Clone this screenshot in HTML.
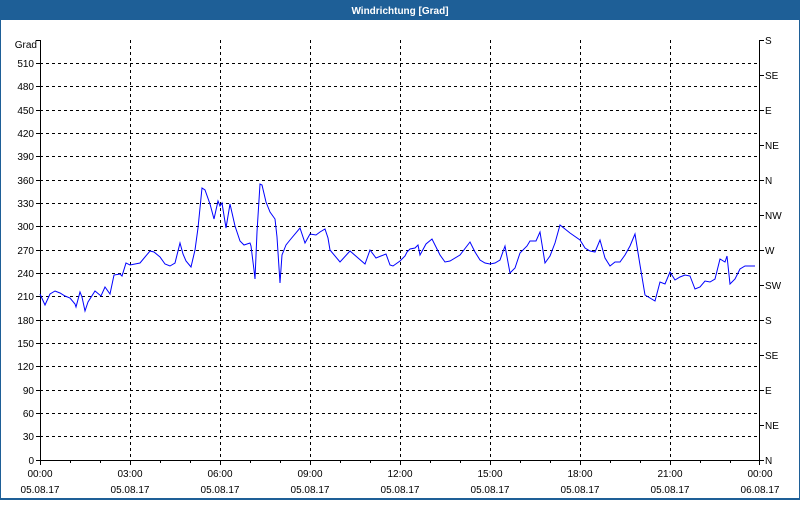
<!DOCTYPE html>
<html><head><meta charset="utf-8"><style>
body{margin:0;width:800px;height:500px;overflow:hidden;background:#fff;font-family:"Liberation Sans",sans-serif;}
</style></head><body>
<svg width="800" height="500" xmlns="http://www.w3.org/2000/svg" font-family="Liberation Sans, sans-serif" font-size="10">
<rect x="0" y="0" width="800" height="500" fill="#fff"/>
<rect x="0" y="0" width="800" height="20" fill="#1e5f97"/>
<rect x="0" y="20" width="1" height="480" fill="#1e5f97"/>
<rect x="799" y="20" width="1" height="480" fill="#1e5f97"/>
<rect x="0" y="498" width="800" height="2" fill="#1e5f97"/>
<text x="400" y="14" fill="#fff" font-weight="bold" font-size="10" text-anchor="middle">Windrichtung [Grad]</text>
<g stroke="#000" stroke-width="1" stroke-dasharray="3,3" shape-rendering="crispEdges">
<line x1="40" x2="760" y1="63.5" y2="63.5"/><line x1="40" x2="760" y1="86.5" y2="86.5"/><line x1="40" x2="760" y1="110.5" y2="110.5"/><line x1="40" x2="760" y1="133.5" y2="133.5"/><line x1="40" x2="760" y1="156.5" y2="156.5"/><line x1="40" x2="760" y1="180.5" y2="180.5"/><line x1="40" x2="760" y1="203.5" y2="203.5"/><line x1="40" x2="760" y1="226.5" y2="226.5"/><line x1="40" x2="760" y1="250.5" y2="250.5"/><line x1="40" x2="760" y1="273.5" y2="273.5"/><line x1="40" x2="760" y1="296.5" y2="296.5"/><line x1="40" x2="760" y1="320.5" y2="320.5"/><line x1="40" x2="760" y1="343.5" y2="343.5"/><line x1="40" x2="760" y1="366.5" y2="366.5"/><line x1="40" x2="760" y1="390.5" y2="390.5"/><line x1="40" x2="760" y1="413.5" y2="413.5"/><line x1="40" x2="760" y1="436.5" y2="436.5"/>
<line x1="130.5" x2="130.5" y1="40" y2="460"/><line x1="220.5" x2="220.5" y1="40" y2="460"/><line x1="310.5" x2="310.5" y1="40" y2="460"/><line x1="400.5" x2="400.5" y1="40" y2="460"/><line x1="490.5" x2="490.5" y1="40" y2="460"/><line x1="580.5" x2="580.5" y1="40" y2="460"/><line x1="670.5" x2="670.5" y1="40" y2="460"/>
</g>
<g stroke="#000" stroke-width="1" shape-rendering="crispEdges">
<line x1="40.5" x2="40.5" y1="40" y2="460"/><line x1="759.5" x2="759.5" y1="40" y2="460"/><line x1="40" x2="760" y1="460.5" y2="460.5"/>
<path d="M36 40.5h4M36 63.5h4M36 86.5h4M36 110.5h4M36 133.5h4M36 156.5h4M36 180.5h4M36 203.5h4M36 226.5h4M36 250.5h4M36 273.5h4M36 296.5h4M36 320.5h4M36 343.5h4M36 366.5h4M36 390.5h4M36 413.5h4M36 436.5h4M36 460.5h4"/>
<path d="M760 40.5h4M760 75.5h4M760 110.5h4M760 145.5h4M760 180.5h4M760 215.5h4M760 250.5h4M760 285.5h4M760 320.5h4M760 355.5h4M760 390.5h4M760 425.5h4M760 460.5h4"/>
<path d="M40.5 460v5M70.5 460v3M100.5 460v3M130.5 460v5M160.5 460v3M190.5 460v3M220.5 460v5M250.5 460v3M280.5 460v3M310.5 460v5M340.5 460v3M370.5 460v3M400.5 460v5M430.5 460v3M460.5 460v3M490.5 460v5M520.5 460v3M550.5 460v3M580.5 460v5M610.5 460v3M640.5 460v3M670.5 460v5M700.5 460v3M730.5 460v3M759.5 460v5"/>
</g>
<g text-anchor="end" fill="#000">
<text x="37" y="48">Grad</text><text x="34" y="67">510</text><text x="34" y="90">480</text><text x="34" y="114">450</text><text x="34" y="137">420</text><text x="34" y="160">390</text><text x="34" y="184">360</text><text x="34" y="207">330</text><text x="34" y="230">300</text><text x="34" y="254">270</text><text x="34" y="277">240</text><text x="34" y="300">210</text><text x="34" y="324">180</text><text x="34" y="347">150</text><text x="34" y="370">120</text><text x="34" y="394">90</text><text x="34" y="417">60</text><text x="34" y="440">30</text><text x="34" y="464">0</text>
</g>
<g fill="#000">
<text x="765" y="44">S</text><text x="765" y="79">SE</text><text x="765" y="114">E</text><text x="765" y="149">NE</text><text x="765" y="184">N</text><text x="765" y="219">NW</text><text x="765" y="254">W</text><text x="765" y="289">SW</text><text x="765" y="324">S</text><text x="765" y="359">SE</text><text x="765" y="394">E</text><text x="765" y="429">NE</text><text x="765" y="464">N</text>
</g>
<g text-anchor="middle" fill="#000">
<text x="40" y="477">00:00</text><text x="40" y="493">05.08.17</text>
<text x="130" y="477">03:00</text><text x="130" y="493">05.08.17</text>
<text x="220" y="477">06:00</text><text x="220" y="493">05.08.17</text>
<text x="310" y="477">09:00</text><text x="310" y="493">05.08.17</text>
<text x="400" y="477">12:00</text><text x="400" y="493">05.08.17</text>
<text x="490" y="477">15:00</text><text x="490" y="493">05.08.17</text>
<text x="580" y="477">18:00</text><text x="580" y="493">05.08.17</text>
<text x="670" y="477">21:00</text><text x="670" y="493">05.08.17</text>
<text x="760" y="477">00:00</text><text x="760" y="493">06.08.17</text>
</g>
<polyline fill="none" stroke="#0000ff" stroke-width="1" points="40,294 45,305 50,294 55,291 60,293 65,296 70,298 75,304 76,307 80,292 82,297 85,311 88,302 95,291 101,296 105,287 110,294 114,275 120,274 122,276 126,263 130,265 140,263 150,251 154,252 160,257 165,264 170,266 175,263 180,243 183,254 186,261 191,267 195,250 198,228 202,188 205,190 210,204 214,219 218,201 220,206 222,203 226,228 230,204 235,226 240,241 244,245 250,243 251,246 254,270 255,279 257,232 260,184 262,185 266,202 270,212 275,219 277,237 280,283 282,255 286,245 290,240 300,228 305,243 310,234 316,235 320,232 325,229 328,238 330,250 340,262 350,251 365,264 370,250 376,258 386,254 390,265 393,266 400,261 405,256 407,252 410,249 415,248 418,245 420,255 426,244 432,239 440,255 445,262 450,261 460,255 470,242 475,252 480,260 485,263 490,264 495,263 500,260 505,246 510,273 515,268 520,253 527,246 530,241 536,241 540,232 545,263 550,256 555,243 560,225 570,233 580,240 585,248 590,251 595,252 600,240 605,258 610,266 615,262 620,262 625,255 630,246 635,234 640,265 645,295 655,301 660,282 665,284 670,272 675,280 680,277 685,275 690,276 695,289 700,287 705,281 710,282 715,279 720,259 725,262 727,256 730,284 735,279 740,269 745,266 755,266"/>
</svg>
</body></html>
